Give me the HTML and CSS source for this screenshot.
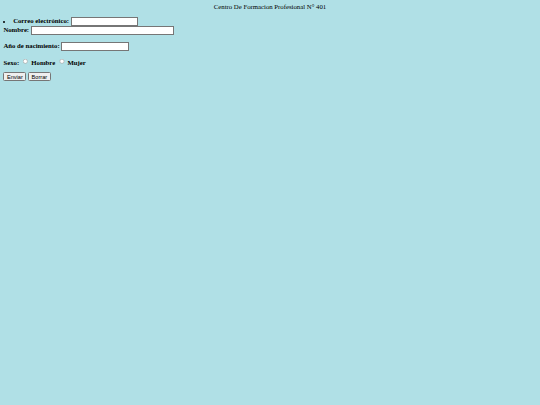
FILE: index.html
```html
<!DOCTYPE html>
<html>
<head>
<meta charset="utf-8">
<link rel="stylesheet" href="styles.css">
</head>
<body>
<div class="title">Centro De Formacion Profesional N° 401</div>
<form class="form">
<ul class="list"><li><b>Correo electrónico:</b> <input type="text" class="in"></li></ul>
<b>Nombre:</b> <input type="text" class="in wide"><br><br>
<b>Año de nacimiento:</b> <input type="text" class="in"><br><br>
<b>Sexo:</b> <input type="radio" name="s"> <b>Hombre</b> <input type="radio" name="s"> <b>Mujer</b><br><br>
<input type="submit" value="Enviar"> <input type="reset" value="Borrar">
</form>
</body>
</html>
```
FILE: styles.css
```css
html { zoom: 0.421875; }
body { background: #b0e0e6; font-family: "Liberation Serif", serif; }
.title { text-align: center; }
.list { margin: 16px 0 0; padding: 0; list-style-position: inside; }
.in { width: 151px; }
.wide { width: 331px; }
```
